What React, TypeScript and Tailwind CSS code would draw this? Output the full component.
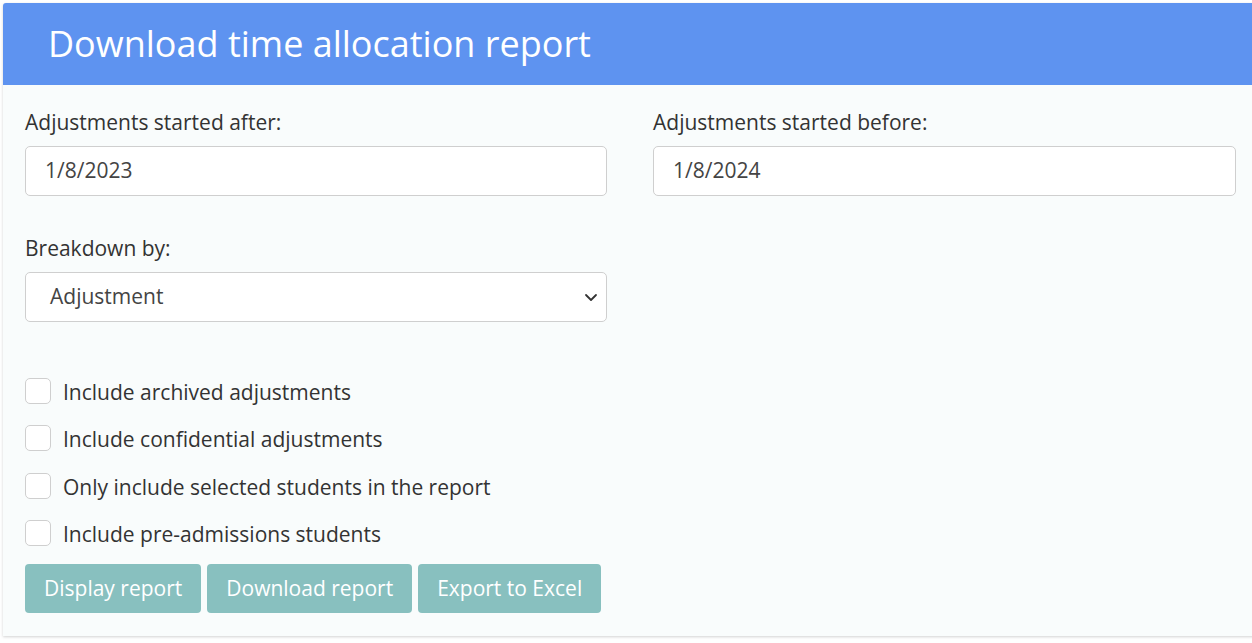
import React from "react";

const font = { fontFamily: '"Open Sans", "Noto Sans", sans-serif' };

function Field({ label, value }: { label: string; value: string }) {
  return (
    <div className="flex flex-col">
      <label className="text-[21px] leading-[28px] text-[#333]">{label}</label>
      <div className="mt-[10px] h-[50px] rounded-[5px] border border-[#cfcfcf] bg-white px-[19px] flex items-center text-[21px] text-[#444]">
        {value}
      </div>
    </div>
  );
}

function Check({ label }: { label: string }) {
  return (
    <div className="flex items-center h-[47.5px]">
      <span className="w-[26px] h-[26px] rounded-[5px] border border-[#cfcfcf] bg-white" />
      <span className="ml-[12px] text-[21px] text-[#333] leading-[28px] mt-[2px]">{label}</span>
    </div>
  );
}

export default function App() {
  return (
    <div className="w-[1252px] h-[643px] bg-white pt-[3px] pl-[3px]" style={font}>
      <div className="w-[1260px] h-[633px] bg-[#f9fcfc] shadow-[0_1px_3px_rgba(0,0,0,0.18)] rounded-tl-[3px]">
        <div className="h-[82px] bg-[#5e93f0] pl-[45px] flex items-center rounded-tl-[3px]">
          <h1 className="text-[36px] text-white leading-none -mt-[1px]">Download time allocation report</h1>
        </div>
        <div className="pl-[22px] w-[1255px] pt-[23px]">
          <div className="grid grid-cols-[582px_583px] gap-x-[46px]">
            <Field label="Adjustments started after:" value="1/8/2023" />
            <Field label="Adjustments started before:" value="1/8/2024" />
          </div>
          <div className="mt-[38px] w-[582px] flex flex-col">
            <label className="text-[21px] leading-[28px] text-[#333]">Breakdown by:</label>
            <div className="mt-[10px] h-[50px] rounded-[5px] border border-[#cfcfcf] bg-white pl-[24px] pr-[6px] flex items-center justify-between text-[21px] text-[#444]">
              <span>Adjustment</span>
              <svg width="14" height="10" viewBox="0 0 14 10" className="mr-[2px]">
                <path d="M2 3 L7 8 L12 3" fill="none" stroke="#333" strokeWidth="1.8" strokeLinecap="round" strokeLinejoin="round" />
              </svg>
            </div>
          </div>
          <div className="mt-[45px] flex flex-col">
            <Check label="Include archived adjustments" />
            <Check label="Include confidential adjustments" />
            <Check label="Only include selected students in the report" />
            <Check label="Include pre-admissions students" />
          </div>
          <div className="mt-[7px] flex gap-[6px]">
            <button className="h-[49px] px-[19px] rounded-[4px] bg-[#88c0bf] text-white text-[21px]">Display report</button>
            <button className="h-[49px] px-[19px] rounded-[4px] bg-[#88c0bf] text-white text-[21px]">Download report</button>
            <button className="h-[49px] px-[19px] rounded-[4px] bg-[#88c0bf] text-white text-[21px]">Export to Excel</button>
          </div>
        </div>
      </div>
    </div>
  );
}
